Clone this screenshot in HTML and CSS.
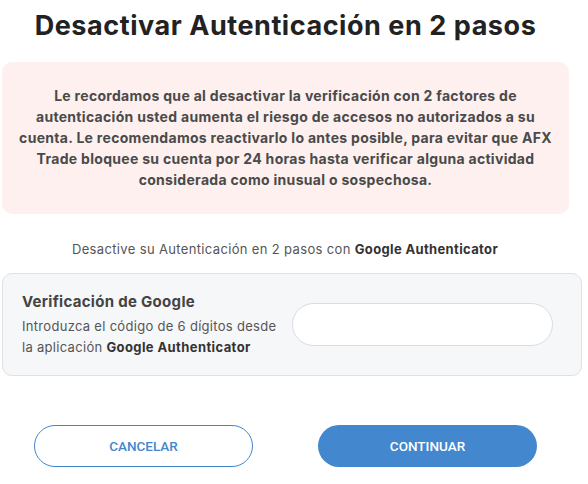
FILE: index.html
```html
<!DOCTYPE html>
<html lang="es">
<head>
<meta charset="utf-8">
<link rel="stylesheet" href="styles.css">
</head>
<body>
<div class="page">
  <h1 class="title">Desactivar Autenticación en 2 pasos</h1>
  <div class="warning">
    <p>Le recordamos que al desactivar la verificación con 2 factores de<br>autenticación usted aumenta el riesgo de accesos no autorizados a su<br>cuenta. Le recomendamos reactivarlo lo antes posible, para evitar que AFX<br>Trade bloquee su cuenta por 24 horas hasta verificar alguna actividad<br>considerada como inusual o sospechosa.</p>
  </div>
  <p class="subtitle">Desactive su Autenticación en 2 pasos con <b>Google Authenticator</b></p>
  <div class="card">
    <div class="card-text">
      <h2 class="card-title">Verificación de Google</h2>
      <p class="card-desc">Introduzca el código de 6 dígitos desde<br>la aplicación <b>Google Authenticator</b></p>
    </div>
    <input class="code-input" type="text">
  </div>
  <div class="actions">
    <button class="btn btn-outline">CANCELAR</button>
    <button class="btn btn-fill">CONTINUAR</button>
  </div>
</div>
</body>
</html>
```

FILE: styles.css
```css
* { box-sizing: border-box; }
html, body { margin: 0; padding: 0; background: #fff; }
body { font-family: Inter, "Noto Sans", sans-serif; color: #444; }
.page { width: 588px; padding: 0 6px 0 2px; }
.title {
  margin: 0;
  padding-top: 9px;
  height: 62px;
  text-align: center;
  font-size: 27px;
  font-weight: 700;
  letter-spacing: 0.55px;
  color: #222;
  width: 567px;
  line-height: 34px;
  white-space: nowrap;
}
.warning {
  width: 567px;
  height: 152px;
  background: #fdf0ef;
  border-radius: 10px;
  padding: 23px 4px 0;
}
.warning p {
  margin: 0;
  text-align: center;
  font-size: 14px;
  font-weight: 700;
  letter-spacing: 0.3px;
  line-height: 21px;
  color: #4a4a4a;
  white-space: nowrap;
}
.subtitle {
  margin: 0;
  padding-top: 25px;
  height: 59px;
  width: 566px;
  text-align: center;
  font-size: 13px;
  letter-spacing: 0.35px;
  line-height: 20px;
  color: #555;
}
.subtitle b { color: #333; font-weight: 700; }
.card {
  width: 580px;
  height: 103px;
  background: #f6f7f9;
  border: 1px solid #dde1e8;
  border-radius: 10px;
  display: flex;
  align-items: center;
  padding: 0 28px 0 19px;
  justify-content: space-between;
}
.card-title {
  margin: 0 0 4px;
  font-size: 15px;
  font-weight: 700;
  letter-spacing: 0.3px;
  color: #444;
  line-height: 20px;
}
.card-desc {
  margin: 0;
  font-size: 13px;
  letter-spacing: 0.3px;
  line-height: 21px;
  color: #555;
  white-space: nowrap;
}
.card-desc b { color: #333; letter-spacing: 0.4px; }
.code-input {
  width: 261px;
  height: 43px;
  border: 1px solid #d8dce5;
  border-radius: 22px;
  background: #fff;
  outline: none;
}
.actions {
  display: flex;
  justify-content: space-between;
  padding: 49px 45px 0 32px;
}
.btn {
  width: 219px;
  height: 42px;
  border-radius: 21px;
  font-family: Roboto, sans-serif;
  font-size: 13.5px;
  font-weight: 500;
  cursor: pointer;
}
.btn-outline {
  background: #fff;
  border: 1px solid #4387ce;
  color: #4387ce;
}
.btn-fill {
  background: #4387ce;
  border: none;
  color: #fff;
}
```
